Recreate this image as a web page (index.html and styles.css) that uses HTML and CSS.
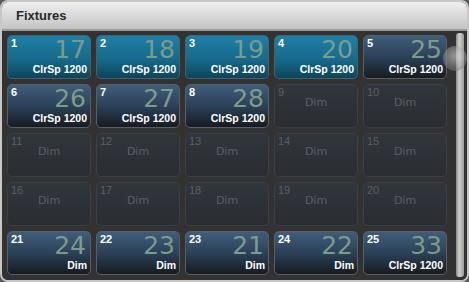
FILE: index.html
```html
<!DOCTYPE html>
<html lang="en">
<head>
    <meta charset="UTF-8">
    <title>Fixtures</title>
    <link rel="stylesheet" href="styles.css">
</head>
<body>
    <div class="window">
        <div class="titlebar">Fixtures</div>
        <div class="content">
            <div class="grid">
                <div class="tile teal"><span class="num">1</span><span class="big">17</span><span class="type">ClrSp 1200</span></div>
                <div class="tile teal"><span class="num">2</span><span class="big">18</span><span class="type">ClrSp 1200</span></div>
                <div class="tile teal"><span class="num">3</span><span class="big">19</span><span class="type">ClrSp 1200</span></div>
                <div class="tile teal"><span class="num">4</span><span class="big">20</span><span class="type">ClrSp 1200</span></div>
                <div class="tile blue"><span class="num">5</span><span class="big">25</span><span class="type">ClrSp 1200</span></div>

                <div class="tile blue"><span class="num">6</span><span class="big">26</span><span class="type">ClrSp 1200</span></div>
                <div class="tile blue"><span class="num">7</span><span class="big">27</span><span class="type">ClrSp 1200</span></div>
                <div class="tile blue"><span class="num">8</span><span class="big">28</span><span class="type">ClrSp 1200</span></div>
                <div class="tile empty"><span class="num">9</span><span class="dim">Dim</span></div>
                <div class="tile empty"><span class="num">10</span><span class="dim">Dim</span></div>

                <div class="tile empty"><span class="num">11</span><span class="dim">Dim</span></div>
                <div class="tile empty"><span class="num">12</span><span class="dim">Dim</span></div>
                <div class="tile empty"><span class="num">13</span><span class="dim">Dim</span></div>
                <div class="tile empty"><span class="num">14</span><span class="dim">Dim</span></div>
                <div class="tile empty"><span class="num">15</span><span class="dim">Dim</span></div>

                <div class="tile empty"><span class="num">16</span><span class="dim">Dim</span></div>
                <div class="tile empty"><span class="num">17</span><span class="dim">Dim</span></div>
                <div class="tile empty"><span class="num">18</span><span class="dim">Dim</span></div>
                <div class="tile empty"><span class="num">19</span><span class="dim">Dim</span></div>
                <div class="tile empty"><span class="num">20</span><span class="dim">Dim</span></div>

                <div class="tile blue"><span class="num">21</span><span class="big">24</span><span class="type">Dim</span></div>
                <div class="tile blue"><span class="num">22</span><span class="big">23</span><span class="type">Dim</span></div>
                <div class="tile blue"><span class="num">23</span><span class="big">21</span><span class="type">Dim</span></div>
                <div class="tile blue"><span class="num">24</span><span class="big">22</span><span class="type">Dim</span></div>
                <div class="tile blue"><span class="num">25</span><span class="big">33</span><span class="type">ClrSp 1200</span></div>
            </div>
            <div class="scrollbar">
                <div class="track"></div>
                <div class="knob"></div>
            </div>
        </div>
    </div>
</body>
</html>
```

FILE: styles.css
```css
body {
    margin: 0;
    background-color: #5a5a5a;
    font-family: 'DejaVu Sans', 'Liberation Sans', sans-serif;
}

.window {
    width: 469px;
    height: 282px;
    box-sizing: border-box;
    border: 2px solid #c9c6c3;
    border-radius: 8px;
    background-color: #2f2f2f;
    overflow: hidden;
    display: flex;
    flex-direction: column;
}

.titlebar {
    height: 27px;
    flex: none;
    display: flex;
    align-items: center;
    padding-left: 14px;
    font-family: 'Liberation Sans', sans-serif;
    font-size: 13px;
    font-weight: bold;
    color: #2a2a2a;
    background: linear-gradient(#f0f0f0, #d9d9d9 50%, #c4c4c4);
    border-bottom: 2px solid #9a9a9a;
}

.content {
    flex: 1;
    display: flex;
    position: relative;
    background-color: #323232;
}

.grid {
    display: grid;
    grid-template-columns: repeat(5, 84px);
    grid-template-rows: repeat(5, 44px);
    column-gap: 5px;
    row-gap: 5px;
    padding: 4px 0 0 5px;
}

.tile {
    position: relative;
    box-sizing: border-box;
    border-radius: 5px;
    border: 1px solid #4a4d50;
    color: #fff;
}

.tile.teal {
    background: linear-gradient(#1e7fa6, #176a8c 55%, #0e4459);
    border-color: #3f6472;
}

.tile.blue {
    background: linear-gradient(#3f5d7c, #2c4159 50%, #171b20);
    border-color: #5a5f66;
}

.tile.empty {
    background: linear-gradient(#30363c, #2a2d31);
    border-color: #3b3e42;
}

.num {
    position: absolute;
    top: 2px;
    left: 3px;
    font-family: 'Liberation Sans', sans-serif;
    font-size: 11px;
    font-weight: bold;
    line-height: 11px;
}

.empty .num {
    color: #5b6064;
    font-weight: normal;
}

.big {
    position: absolute;
    top: 1px;
    right: 4px;
    font-size: 25px;
    line-height: 26px;
    color: #7d9c88;
}

.type {
    position: absolute;
    bottom: 3px;
    right: 3px;
    font-family: 'Liberation Sans', sans-serif;
    font-size: 10.5px;
    font-weight: bold;
    line-height: 11px;
}

.dim {
    display: block;
    text-align: center;
    padding-top: 11px;
    font-size: 11px;
    color: #5b6064;
}

.scrollbar {
    position: absolute;
    top: 2px;
    right: 3px;
    bottom: 3px;
    width: 8px;
}

.track {
    height: 100%;
    border-radius: 3px;
    background: linear-gradient(90deg, #8a8a8a, #d0d0d0 40%, #9a9a9a);
}

.knob {
    position: absolute;
    top: 13px;
    left: -13px;
    width: 24px;
    height: 25px;
    border-radius: 50%;
    background: radial-gradient(circle at 50% 40%, rgba(230, 230, 230, 0.55), rgba(150, 150, 150, 0.45) 60%, rgba(90, 90, 90, 0.6));
}
```
